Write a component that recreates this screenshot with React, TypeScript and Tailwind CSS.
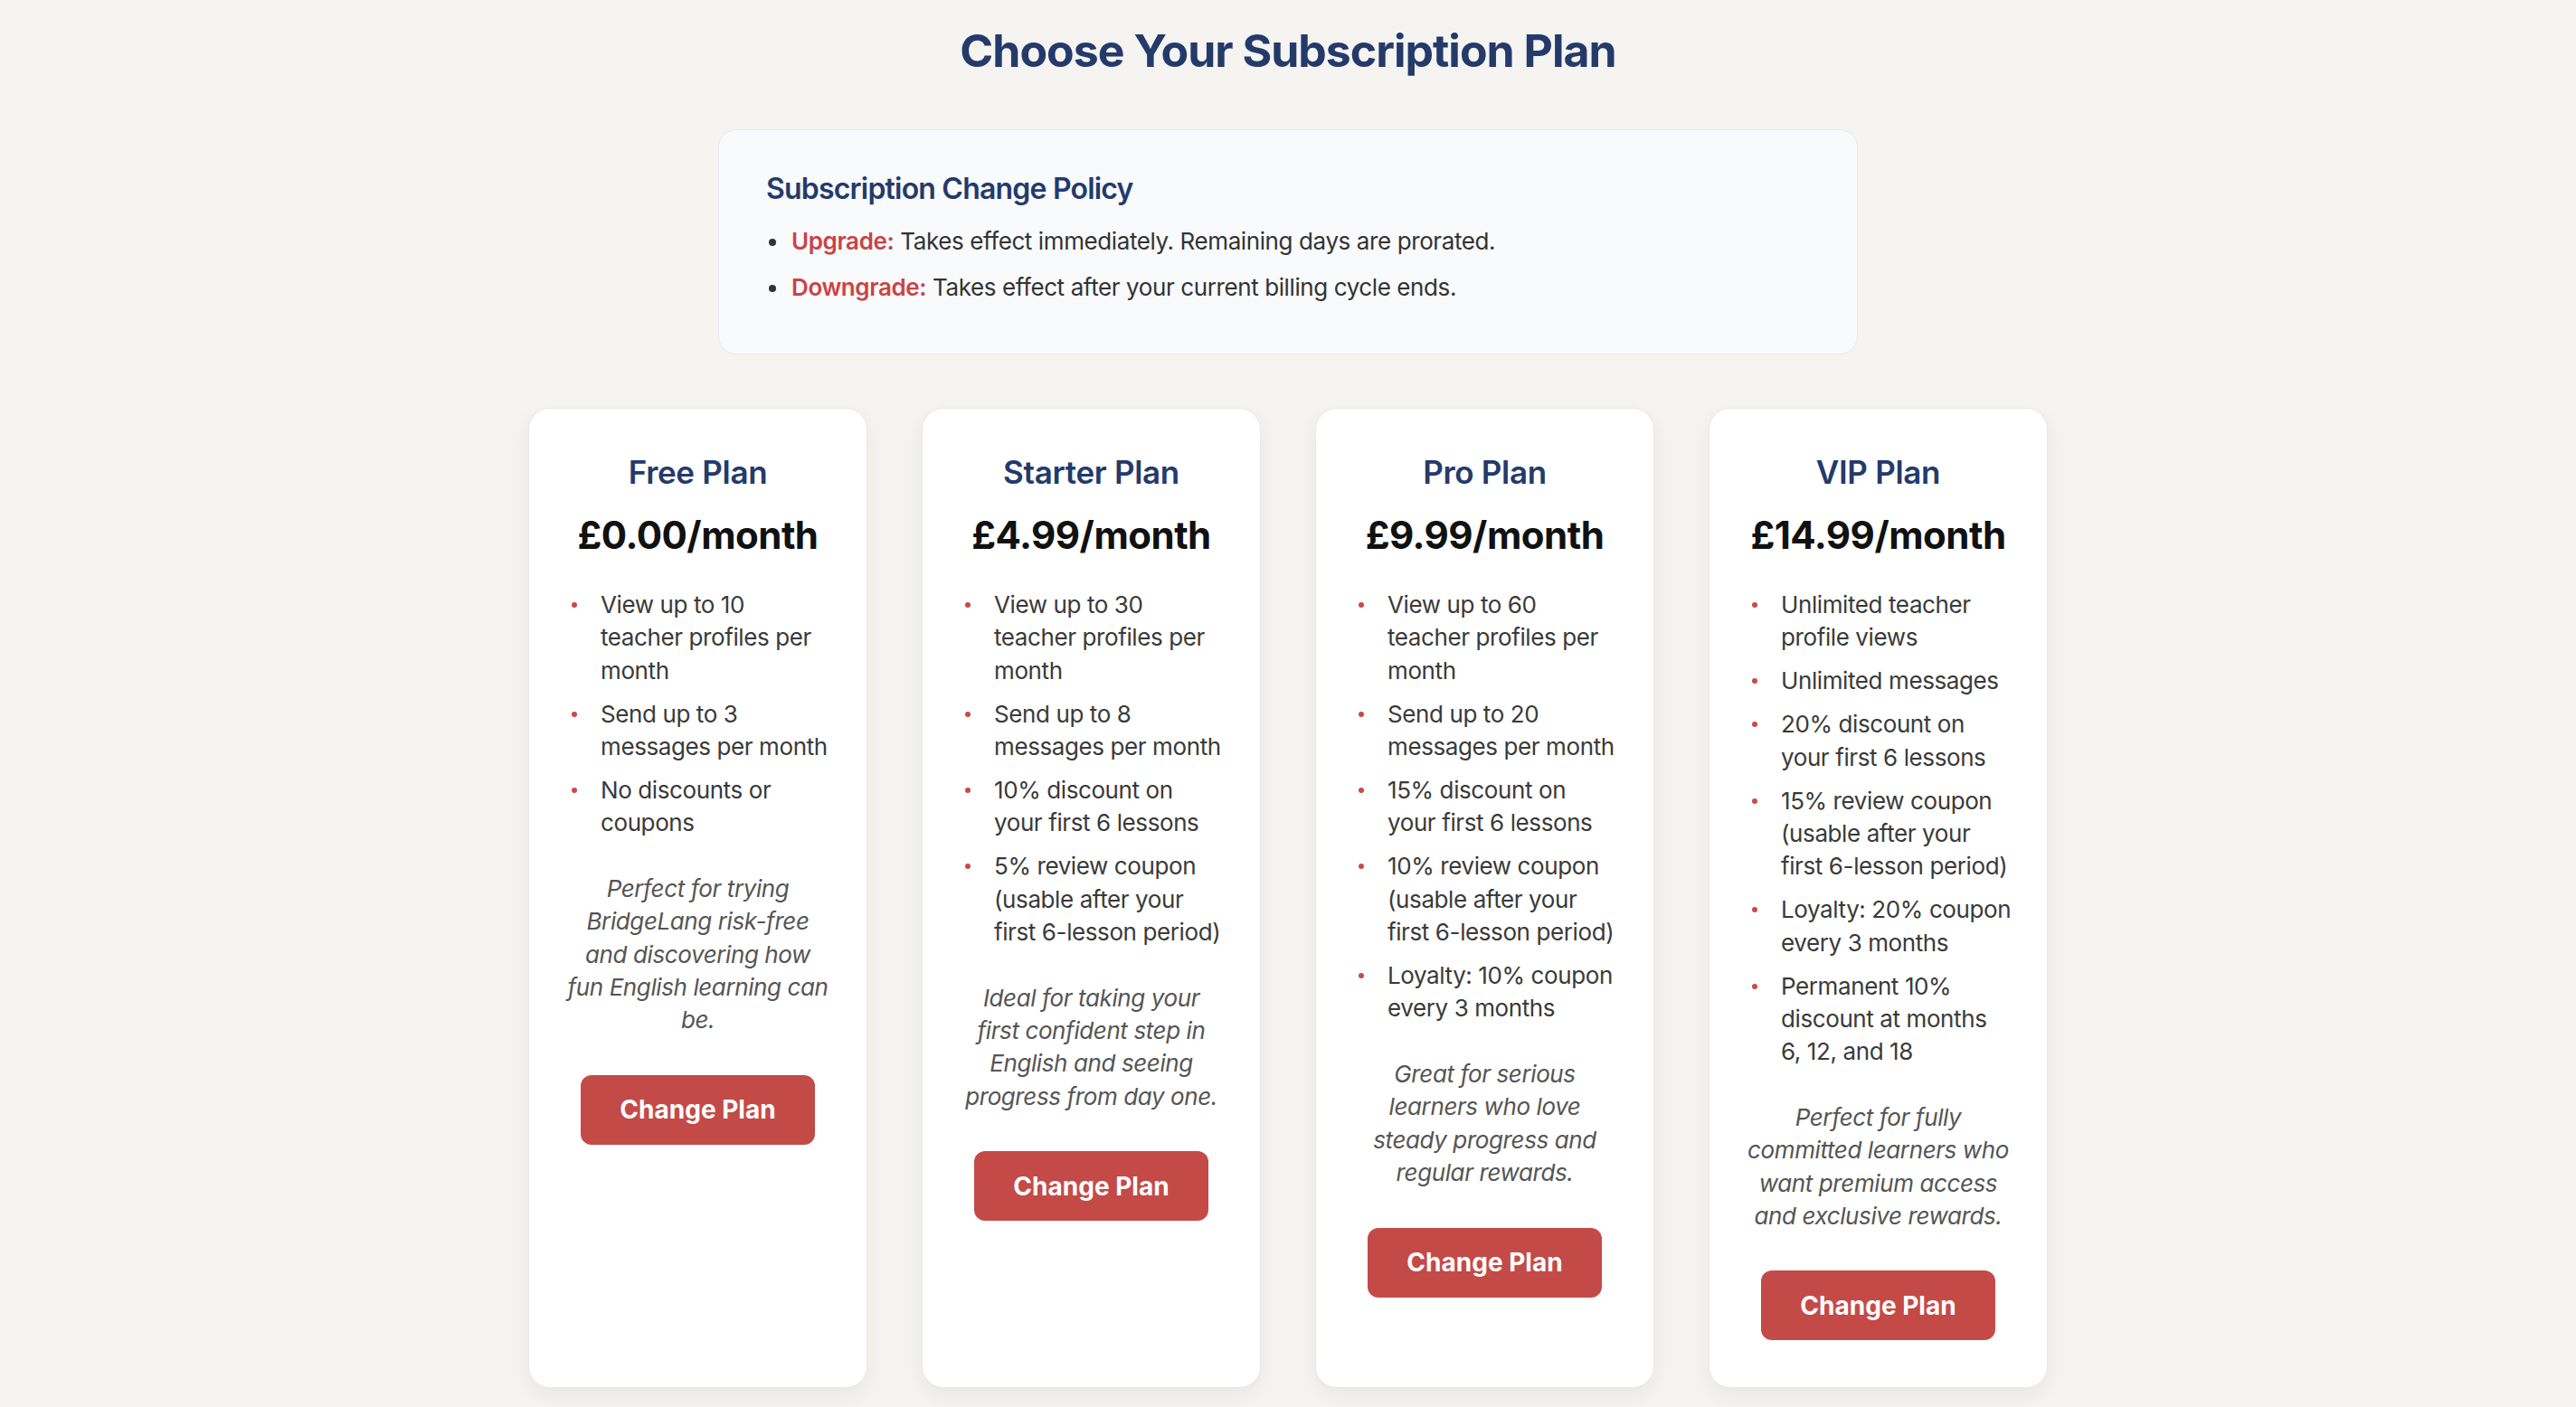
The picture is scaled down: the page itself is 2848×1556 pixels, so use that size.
const plans = [
  {
    name: "Free Plan",
    price: "£0.00/month",
    features: [
      "View up to 10 teacher profiles per month",
      "Send up to 3 messages per month",
      "No discounts or coupons",
    ],
    note: "Perfect for trying BridgeLang risk-free and discovering how fun English learning can be.",
  },
  {
    name: "Starter Plan",
    price: "£4.99/month",
    features: [
      "View up to 30 teacher profiles per month",
      "Send up to 8 messages per month",
      "10% discount on your first 6 lessons",
      "5% review coupon (usable after your first 6-lesson period)",
    ],
    note: "Ideal for taking your first confident step in English and seeing progress from day one.",
  },
  {
    name: "Pro Plan",
    price: "£9.99/month",
    features: [
      "View up to 60 teacher profiles per month",
      "Send up to 20 messages per month",
      "15% discount on your first 6 lessons",
      "10% review coupon (usable after your first 6-lesson period)",
      "Loyalty: 10% coupon every 3 months",
    ],
    note: "Great for serious learners who love steady progress and regular rewards.",
  },
  {
    name: "VIP Plan",
    price: "£14.99/month",
    features: [
      "Unlimited teacher profile views",
      "Unlimited messages",
      "20% discount on your first 6 lessons",
      "15% review coupon (usable after your first 6-lesson period)",
      "Loyalty: 20% coupon every 3 months",
      "Permanent 10% discount at months 6, 12, and 18",
    ],
    note: "Perfect for fully committed learners who want premium access and exclusive rewards.",
  },
];

function PlanCard({ plan }: { plan: (typeof plans)[number] }) {
  return (
    <div className="bg-white rounded-[24px] border border-[#e6e9f0] shadow-[0_8px_24px_rgba(0,0,0,0.06)] pt-[48px] pb-[52px] px-[38px] flex flex-col items-center">
      <h2 className="text-[35px] leading-[44px] font-semibold tracking-[-0.3px] text-[#243a6b]">{plan.name}</h2>
      <p className="mt-[23px] text-[42px] leading-[50px] font-bold tracking-[-0.5px] text-[#111]">{plan.price}</p>
      <ul className="mt-[34px] self-stretch flex flex-col gap-[11.5px]">
        {plan.features.map((f) => (
          <li key={f} className="relative pl-[41px] text-[26px] leading-[36.4px] tracking-[-0.4px] text-[#3a3a3a]">
            <span className="absolute left-[9px] top-[15px] w-[6px] h-[6px] rounded-full bg-[#c94a48]" />
            {f}
          </li>
        ))}
      </ul>
      <p className="mt-[36px] px-[3.5px] text-center italic text-[26px] leading-[36.4px] tracking-[-0.4px] text-[#555]">{plan.note}</p>
      <button className="mt-[42px] h-[77px] px-[43px] rounded-[12px] bg-[#c44a47] text-white text-[28px] font-bold">
        Change Plan
      </button>
    </div>
  );
}

export default function App() {
  return (
    <div className="min-h-screen bg-[#f5f4f0] pt-[24px] pb-[20px] font-['Inter',sans-serif]">
      <h1 className="text-center text-[50px] leading-[64px] font-bold tracking-[-1px] text-[#243a6b]">
        Choose Your Subscription Plan
      </h1>

      <div className="mt-[55px] mx-auto w-[1260px] bg-[#f8fafc] border border-[#e8eaee] rounded-[20px] pt-[43px] pb-[53px] px-[52px]">
        <h3 className="text-[32px] leading-[44px] font-semibold tracking-[-0.8px] text-[#243a6b]">Subscription Change Policy</h3>
        <ul className="mt-[16px] flex flex-col gap-[11px]">
          <li className="relative pl-[28px] text-[26px] leading-[40px] tracking-[-0.4px] text-[#333]">
            <span className="absolute left-[3px] top-[17px] w-[8px] h-[8px] rounded-full bg-[#333]" />
            <span className="font-semibold text-[#c94444]">Upgrade:</span> Takes effect immediately. Remaining days are prorated.
          </li>
          <li className="relative pl-[28px] text-[26px] leading-[40px] tracking-[-0.4px] text-[#333]">
            <span className="absolute left-[3px] top-[17px] w-[8px] h-[8px] rounded-full bg-[#333]" />
            <span className="font-semibold text-[#c94444]">Downgrade:</span> Takes effect after your current billing cycle ends.
          </li>
        </ul>
      </div>

      <div className="mt-[59px] mx-auto w-[1680px] grid grid-cols-4 gap-[60px]">
        {plans.map((p) => (
          <PlanCard key={p.name} plan={p} />
        ))}
      </div>
    </div>
  );
}
